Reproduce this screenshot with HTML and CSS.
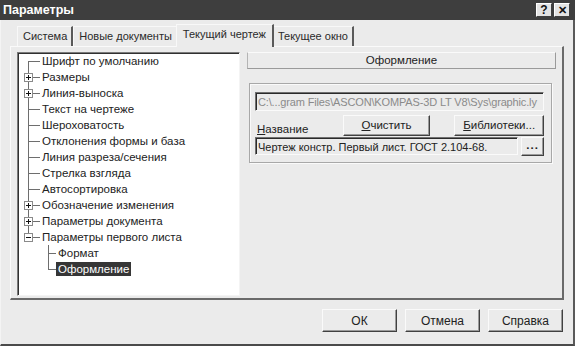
FILE: index.html
```html
<!DOCTYPE html>
<html lang="ru">
<head>
<meta charset="utf-8">
<title>Параметры</title>
<link rel="stylesheet" href="styles.css">
</head>
<body>
<div class="window">
  <div class="titlebar">
    <span class="title">Параметры</span>
    <div class="tbtns">
      <span class="tbtn">?</span>
      <span class="tbtn tclose">✕</span>
    </div>
  </div>

  <div class="tabs">
    <div class="tab">Система</div>
    <div class="tab">Новые документы</div>
    <div class="tab active">Текущий чертеж</div>
    <div class="tab">Текущее окно</div>
  </div>

  <div class="panel">
    <div class="tree">
      <div class="row"><span class="g g-first"></span><span class="lbl">Шрифт по умолчанию</span></div>
      <div class="row"><span class="g g-mid"><span class="exp plus"></span></span><span class="lbl">Размеры</span></div>
      <div class="row"><span class="g g-mid"><span class="exp plus"></span></span><span class="lbl">Линия-выноска</span></div>
      <div class="row"><span class="g g-mid"></span><span class="lbl">Текст на чертеже</span></div>
      <div class="row"><span class="g g-mid"></span><span class="lbl">Шероховатость</span></div>
      <div class="row"><span class="g g-mid"></span><span class="lbl">Отклонения формы и база</span></div>
      <div class="row"><span class="g g-mid"></span><span class="lbl">Линия разреза/сечения</span></div>
      <div class="row"><span class="g g-mid"></span><span class="lbl">Стрелка взгляда</span></div>
      <div class="row"><span class="g g-mid"></span><span class="lbl">Автосортировка</span></div>
      <div class="row"><span class="g g-mid"><span class="exp plus"></span></span><span class="lbl">Обозначение изменения</span></div>
      <div class="row"><span class="g g-mid"><span class="exp plus"></span></span><span class="lbl">Параметры документа</span></div>
      <div class="row"><span class="g g-last"><span class="exp minus"></span></span><span class="lbl">Параметры первого листа</span></div>
      <div class="row"><span class="g2 g2-mid"></span><span class="lbl">Формат</span></div>
      <div class="row"><span class="g2 g2-last"></span><span class="lbl sel">Оформление</span></div>
    </div>

    <div class="right">
      <div class="header">Оформление</div>
      <div class="group">
        <div class="field path">C:\...gram Files\ASCON\KOMPAS-3D LT V8\Sys\graphic.ly</div>
        <div class="btnrow">
          <span class="caption"><u>Н</u>азвание</span>
          <span class="btn b-clear"><u>О</u>чистить</span>
          <span class="btn b-lib"><u>Б</u>иблиотеки...</span>
        </div>
        <div class="namerow">
          <div class="field name">Чертеж констр. Первый лист. ГОСТ 2.104-68.</div>
          <span class="btn b-dots">...</span>
        </div>
      </div>
    </div>
  </div>

  <div class="footer">
    <span class="btn b-main">ОК</span>
    <span class="btn b-main">Отмена</span>
    <span class="btn b-main">Справка</span>
  </div>
</div>
</body>
</html>
```

FILE: styles.css
```css
* { box-sizing: border-box; }

html, body {
  margin: 0;
  padding: 0;
  background: #ebebeb;
}

body {
  font-family: "Liberation Sans", Arial, sans-serif;
  font-size: 11px;
  color: #222;
}

.window {
  width: 575px;
  height: 346px;
  background: #ebebeb;
  border-left: 1px solid #f4f4f4;
  border-right: 2px solid #5a5a5a;
  border-bottom: 2px solid #4a4a4a;
  display: flex;
  flex-direction: column;
}

.titlebar {
  height: 20px;
  margin-left: -1px;
  margin-right: -2px;
  background: #3e3e3e;
  display: flex;
  align-items: center;
  justify-content: space-between;
  padding: 0 5px 0 3px;
}

.title {
  color: #fff;
  font-weight: bold;
  font-size: 12.5px;
}

.tbtns {
  display: flex;
  gap: 2px;
}

.tbtn {
  width: 16px;
  height: 14px;
  background: #e4e4e4;
  border: 1px solid;
  border-color: #fff #404040 #404040 #fff;
  display: flex;
  align-items: center;
  justify-content: center;
  font-weight: bold;
  font-size: 12px;
  color: #111;
  line-height: 1;
}

.tclose { font-size: 11px; }

.tabs {
  display: flex;
  align-items: flex-end;
  height: 26px;
  padding-left: 16px;
}

.tab {
  height: 20px;
  padding: 3px 4px 0 5px;
  border-top: 1px solid #f8f8f8;
  border-left: 1px solid #f8f8f8;
  border-right: 2px solid #5a5a5a;
  white-space: nowrap;
  color: #2a2a2a;
  font-size: 11px;
}

.tab.active {
  height: 23px;
  padding: 3px 6px 0 6px;
  margin: 0 -2px -1px -2px;
  background: #ebebeb;
  position: relative;
  z-index: 1;
}

.panel {
  margin-left: 9px;
  width: 554px;
  height: 254px;
  border-top: 1px solid #fafafa;
  border-left: 1px solid #fafafa;
  border-right: 2px solid #6a6a6a;
  border-bottom: 2px solid #6a6a6a;
  display: flex;
  padding: 5px 6px 3px 6px;
  gap: 7px;
}

.tree {
  width: 224px;
  height: 244px;
  background: #fff;
  border: 1px solid;
  border-color: #7a7a7a #f4f4f4 #f4f4f4 #7a7a7a;
  box-shadow: inset 1px 1px 0 #303030;
  font-size: 11.5px;
}

.row {
  height: 16px;
  display: flex;
  align-items: center;
}

.lbl {
  padding: 0 2px;
  line-height: 14px;
  white-space: nowrap;
  color: #222;
}

.lbl.sel {
  background: #363636;
  color: #fff;
}

.g, .g2 {
  height: 16px;
  display: flex;
  align-items: center;
  flex: none;
  background-repeat: no-repeat;
}

.g { width: 22px; }
.g2 { width: 38px; }

.g-first {
  background-image: linear-gradient(#6e6e6e, #6e6e6e), linear-gradient(#6e6e6e, #6e6e6e);
  background-position: 10px 8px, 10px 8px;
  background-size: 1px 8px, 12px 1px;
}

.g-mid {
  background-image: linear-gradient(#6e6e6e, #6e6e6e), linear-gradient(#6e6e6e, #6e6e6e);
  background-position: 10px 0, 10px 8px;
  background-size: 1px 16px, 12px 1px;
}

.g-last {
  background-image: linear-gradient(#6e6e6e, #6e6e6e), linear-gradient(#6e6e6e, #6e6e6e);
  background-position: 10px 0, 10px 8px;
  background-size: 1px 9px, 12px 1px;
}

.g2-mid {
  background-image: linear-gradient(#6e6e6e, #6e6e6e), linear-gradient(#6e6e6e, #6e6e6e);
  background-position: 30px 0, 30px 8px;
  background-size: 1px 16px, 8px 1px;
}

.g2-last {
  background-image: linear-gradient(#6e6e6e, #6e6e6e), linear-gradient(#6e6e6e, #6e6e6e);
  background-position: 30px 0, 30px 8px;
  background-size: 1px 9px, 8px 1px;
}

.exp {
  width: 9px;
  height: 9px;
  margin-left: 6px;
  margin-top: 1px;
  border: 1px solid #8a8a8a;
  background-color: #fff;
  background-repeat: no-repeat;
}

.plus {
  background-image: linear-gradient(#111, #111), linear-gradient(#111, #111);
  background-position: 1px 3px, 3px 1px;
  background-size: 5px 1px, 1px 5px;
}

.minus {
  background-image: linear-gradient(#111, #111);
  background-position: 1px 3px;
  background-size: 5px 1px;
}

.right {
  width: 309px;
  display: flex;
  flex-direction: column;
}

.header {
  height: 17px;
  border: 1px solid;
  border-color: #fafafa #9a9a9a #9a9a9a #b4b4b4;
  text-align: center;
  line-height: 15px;
  font-size: 11.5px;
  color: #222;
}

.group {
  margin: 14px 4px 0 2px;
  height: 80px;
  border: 1px solid #a8a8a8;
  box-shadow: 1px 1px 0 #fafafa, inset 1px 1px 0 #fafafa;
  padding: 8px 7px 0 5px;
  display: flex;
  flex-direction: column;
}

.field {
  height: 19px;
  border: 1px solid;
  border-color: #707070 #fafafa #fafafa #707070;
  box-shadow: inset 1px 1px 0 #2a2a2a;
  padding: 2px 1px 0 2px;
  white-space: nowrap;
  overflow: hidden;
  line-height: 14px;
  background: #ebebeb;
}

.path {
  color: #8a8a8a;
  font-size: 11px;
  letter-spacing: -0.15px;
}

.btnrow {
  display: flex;
  align-items: center;
  height: 24px;
  margin-top: 2px;
}

.caption {
  width: 89px;
  padding-left: 2px;
  padding-top: 8px;
  font-size: 11.5px;
  color: #222;
}

.btn {
  display: inline-flex;
  align-items: center;
  justify-content: center;
  background: #ebebeb;
  border: 1px solid;
  border-color: #fafafa #404040 #404040 #fafafa;
  box-shadow: inset -1px -1px 0 #9a9a9a;
  color: #222;
  font-size: 11.5px;
  white-space: nowrap;
}

.b-clear {
  width: 89px;
  height: 21px;
}

.b-lib {
  width: 91px;
  height: 21px;
  margin-left: 24px;
}

.namerow {
  display: flex;
  gap: 3px;
}

.name {
  width: 266px;
  height: 18px;
  color: #222;
}

.b-dots {
  width: 23px;
  height: 19px;
  font-weight: bold;
  letter-spacing: 1px;
  padding-bottom: 4px;
}

.footer {
  display: flex;
  justify-content: flex-end;
  gap: 8px;
  padding: 9px 10px 0 0;
}

.b-main {
  width: 75px;
  height: 23px;
  font-size: 12px;
}
```
